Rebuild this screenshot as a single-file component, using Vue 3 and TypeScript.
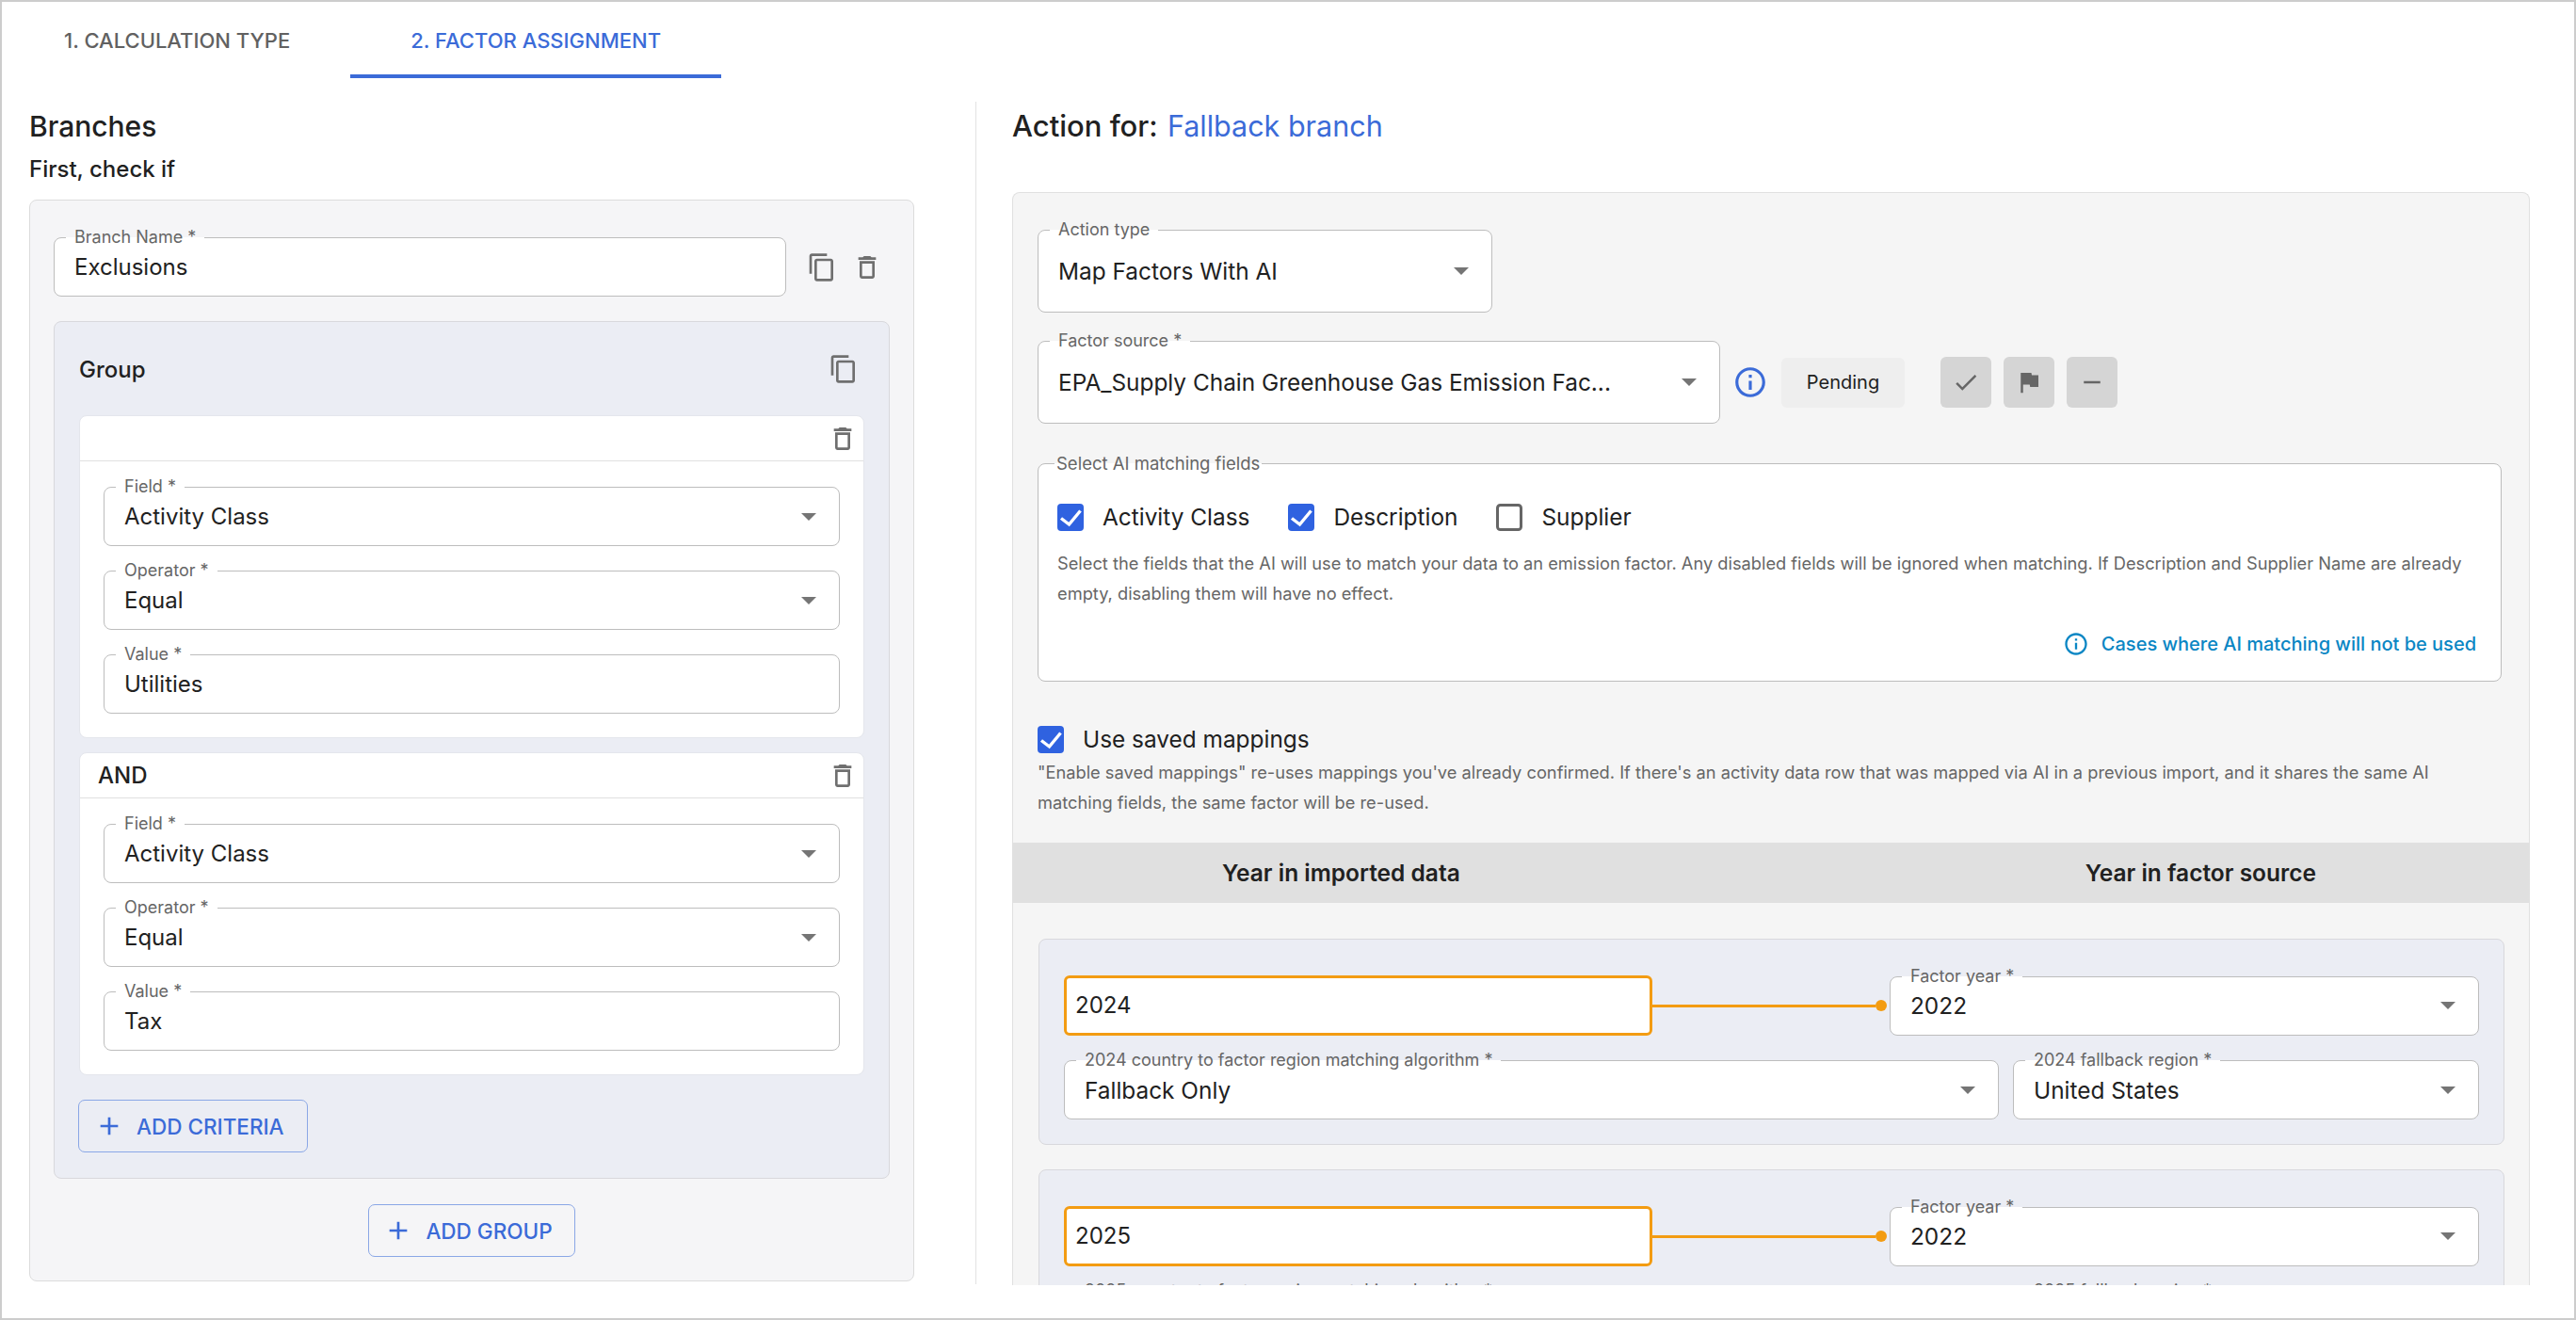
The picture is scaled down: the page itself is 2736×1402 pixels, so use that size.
<script setup lang="ts">
const copyPath = 'M16 1H4c-1.1 0-2 .9-2 2v14h2V3h12V1zm3 4H8c-1.1 0-2 .9-2 2v14c0 1.1.9 2 2 2h11c1.1 0 2-.9 2-2V7c0-1.1-.9-2-2-2zm0 16H8V7h11v14z'
const trashPath = 'M6 19c0 1.1.9 2 2 2h8c1.1 0 2-.9 2-2V7H6v12zM8 9h8v10H8V9zm7.5-5l-1-1h-5l-1 1H5v2h14V4h-3.5z'
const plusPath = 'M19 13h-6v6h-2v-6H5v-2h6V5h2v6h6v2z'
const infoPath = 'M11 7h2v2h-2zm0 4h2v6h-2zm1-9C6.48 2 2 6.48 2 12s4.48 10 10 10 10-4.48 10-10S17.52 2 12 2zm0 18c-4.41 0-8-3.59-8-8s3.59-8 8-8 8 3.59 8 8-3.59 8-8 8z'

const criteria = [
  { join: '', value: 'Utilities' },
  { join: 'AND', value: 'Tax' }
]

const matchFields = [
  { name: 'Activity Class', checked: true },
  { name: 'Description', checked: true },
  { name: 'Supplier', checked: false }
]

const statusIcons = [
  'M9 16.17 4.83 12l-1.42 1.41L9 19 21 7l-1.41-1.41z',
  'M14.4 6 14 4H5v17h2v-7h5.6l.4 2h7V6z',
  'M19 13H5v-2h14v2z'
]

const years = ['2024', '2025']
</script>

<template>
  <div class="page">
    <nav class="tabs">
      <div class="tab">1. CALCULATION TYPE</div>
      <div class="tab active">2. FACTOR ASSIGNMENT</div>
    </nav>

    <main class="columns">
      <section class="left">
        <h2 class="title">Branches</h2>
        <h3 class="subtitle">First, check if</h3>

        <div class="branch">
          <div class="branch-row">
            <div class="field branch-name">
              <span class="legend">Branch Name *</span>
              <span class="text">Exclusions</span>
            </div>
            <svg class="icon" viewBox="0 0 24 24"><path :d="copyPath" /></svg>
            <svg class="icon" viewBox="0 0 24 24"><path :d="trashPath" /></svg>
          </div>

          <div class="group">
            <div class="group-head">
              <span class="group-title">Group</span>
              <svg class="icon" viewBox="0 0 24 24"><path :d="copyPath" /></svg>
            </div>

            <div v-for="c in criteria" :key="c.value" class="criterion">
              <div class="criterion-head">
                <span>{{ c.join }}</span>
                <svg class="icon" viewBox="0 0 24 24"><path :d="trashPath" /></svg>
              </div>
              <div class="criterion-body">
                <div class="field">
                  <span class="legend">Field *</span>
                  <span class="text">Activity Class</span>
                  <i class="arrow"></i>
                </div>
                <div class="field">
                  <span class="legend">Operator *</span>
                  <span class="text">Equal</span>
                  <i class="arrow"></i>
                </div>
                <div class="field">
                  <span class="legend">Value *</span>
                  <span class="text">{{ c.value }}</span>
                </div>
              </div>
            </div>

            <button class="add-btn criteria-btn">
              <svg viewBox="0 0 24 24"><path :d="plusPath" /></svg>
              ADD CRITERIA
            </button>
          </div>

          <button class="add-btn group-btn">
            <svg viewBox="0 0 24 24"><path :d="plusPath" /></svg>
            ADD GROUP
          </button>
        </div>
      </section>

      <section class="right">
        <h2 class="title action-title">Action for: <span class="blue">Fallback branch</span></h2>

        <div class="panel">
          <div class="panel-top">
            <div class="field action-type">
              <span class="legend">Action type</span>
              <span class="text">Map Factors With AI</span>
              <i class="arrow"></i>
            </div>

            <div class="source-row">
              <div class="field factor-source">
                <span class="legend">Factor source *</span>
                <span class="text">EPA_Supply Chain Greenhouse Gas Emission Fac...</span>
                <i class="arrow"></i>
              </div>
              <svg class="info" viewBox="0 0 24 24"><path :d="infoPath" /></svg>
              <div class="pending">Pending</div>
              <div class="status-btns">
                <div v-for="d in statusIcons" :key="d" class="status-btn">
                  <svg viewBox="0 0 24 24"><path :d="d" /></svg>
                </div>
              </div>
            </div>

            <div class="matching">
              <span class="legend matching-legend">Select AI matching fields</span>
              <div class="checks">
                <label v-for="f in matchFields" :key="f.name" class="check">
                  <svg class="box" viewBox="0 0 28 29">
                    <template v-if="f.checked">
                      <rect width="28" height="29" rx="4" fill="#2f62e0" />
                      <path d="M4 15.5l8.5 6.5L24.5 7.5" fill="none" stroke="#fff" stroke-width="3.4" />
                    </template>
                    <rect v-else x="1.5" y="1.5" width="25" height="26" rx="3" fill="#fff" stroke="#666" stroke-width="3" />
                  </svg>
                  {{ f.name }}
                </label>
              </div>
              <p class="help">Select the fields that the AI will use to match your data to an emission factor. Any disabled fields will be ignored when matching. If Description and Supplier Name are already empty, disabling them will have no effect.</p>
              <div class="cases">
                <svg viewBox="0 0 24 24"><path :d="infoPath" /></svg>
                Cases where AI matching will not be used
              </div>
            </div>

            <label class="check saved">
              <svg class="box" viewBox="0 0 28 29">
                <rect width="28" height="29" rx="4" fill="#2f62e0" />
                <path d="M4 15.5l8.5 6.5L24.5 7.5" fill="none" stroke="#fff" stroke-width="3.4" />
              </svg>
              Use saved mappings
            </label>
            <p class="help saved-help">"Enable saved mappings" re-uses mappings you've already confirmed. If there's an activity data row that was mapped via AI in a previous import, and it shares the same AI matching fields, the same factor will be re-used.</p>
          </div>

          <div class="year-head">
            <span>Year in imported data</span>
            <span>Year in factor source</span>
          </div>

          <div class="year-list">
            <div v-for="y in years" :key="y" class="year-card">
              <div class="year-row">
                <div class="year-input">{{ y }}</div>
                <div class="connector"><i class="line"></i><i class="dot"></i></div>
                <div class="field factor-year">
                  <span class="legend">Factor year *</span>
                  <span class="text">2022</span>
                  <i class="arrow"></i>
                </div>
              </div>
              <div class="year-row region-row">
                <div class="field algorithm">
                  <span class="legend">{{ y }} country to factor region matching algorithm *</span>
                  <span class="text">Fallback Only</span>
                  <i class="arrow"></i>
                </div>
                <div class="field region">
                  <span class="legend">{{ y }} fallback region *</span>
                  <span class="text">United States</span>
                  <i class="arrow"></i>
                </div>
              </div>
            </div>
          </div>
        </div>
      </section>
    </main>
  </div>
</template>

<style>
html,
body {
  margin: 0;
  background: #fff;
}
</style>

<style scoped>
.page {
  width: 2736px;
  height: 1402px;
  box-sizing: border-box;
  border: 2px solid #ccc;
  overflow: hidden;
  background: #fff;
  color: #212121;
  font-family: Inter, "Liberation Sans", sans-serif;
}

.tabs {
  display: flex;
  height: 81px;
  padding-left: 2px;
}

.tab {
  padding: 0 64px;
  line-height: 83px;
  font-size: 22px;
  font-weight: 500;
  color: #616161;
}

.tab.active {
  color: #3b6bd8;
  box-shadow: inset 0 -4px 0 #3b6bd8;
}

.columns {
  display: flex;
  align-items: flex-start;
}

.left {
  width: 1034px;
  box-sizing: border-box;
  padding: 31px 0 0 29px;
  flex: none;
}

.title {
  margin: 0;
  font-size: 30px;
  line-height: 40px;
  font-weight: 500;
}

.subtitle {
  margin: 10px 0 16px;
  font-size: 24px;
  line-height: 32px;
  font-weight: 500;
}

.branch {
  width: 940px;
  box-sizing: border-box;
  padding: 39px 25px 25px;
  background: #f5f5f7;
  border: 1px solid #dcdcdc;
  border-radius: 8px;
  --outer: #f5f5f7;
}

.branch-row {
  display: flex;
  align-items: center;
  gap: 16px;
}

.branch-name {
  flex: none;
  width: 778px;
  height: 62px;
  margin-right: 6px;
}

.icon {
  flex: none;
  width: 32px;
  height: 32px;
  fill: #6f6f6f;
}

.field {
  position: relative;
  display: flex;
  align-items: center;
  box-sizing: border-box;
  height: 63px;
  padding: 0 50px 0 21px;
  background: #fff;
  border: 1px solid #bdbdbd;
  border-radius: 8px;
  font-size: 24px;
}

.legend {
  position: absolute;
  top: -12px;
  left: 12px;
  padding: 0 9px;
  font-size: 18px;
  line-height: 22px;
  color: #666;
  white-space: nowrap;
  background: linear-gradient(var(--outer) 50%, #fff 50%);
}

.text {
  white-space: nowrap;
}

.arrow {
  position: absolute;
  top: 50%;
  right: 24px;
  margin-top: -4px;
  border-left: 8px solid transparent;
  border-right: 8px solid transparent;
  border-top: 8px solid #757575;
}

.group {
  margin-top: 26px;
  padding: 34px 26px 27px;
  background: #ebedf4;
  border: 1px solid #d8d8dc;
  border-radius: 8px;
}

.group-head {
  display: flex;
  align-items: center;
  justify-content: space-between;
  padding-right: 6px;
  margin-bottom: 33px;
  font-size: 24px;
  font-weight: 500;
}

.criterion {
  margin-bottom: 15px;
  background: #fff;
  border: 1px solid #e4e6ec;
  border-radius: 8px;
  --outer: #fff;
}

.criterion-head {
  display: flex;
  align-items: center;
  justify-content: space-between;
  height: 47px;
  padding: 0 6px 0 19px;
  border-bottom: 1px solid #e0e0e0;
  font-size: 24px;
  font-weight: 500;
}

.criterion-body {
  display: flex;
  flex-direction: column;
  gap: 26px;
  padding: 27px 25px 25px;
}

.add-btn {
  display: inline-flex;
  align-items: center;
  gap: 13px;
  height: 56px;
  padding: 0 24px 0 16px;
  background: transparent;
  border: 1.5px solid #8aa7e6;
  border-radius: 7px;
  color: #3b6bd8;
  font-family: inherit;
  font-size: 22.5px;
  font-weight: 500;
}

.add-btn svg {
  width: 32px;
  height: 32px;
  fill: #3b6bd8;
}

.criteria-btn {
  margin: 11px 0 0 -1px;
}

.group-btn {
  display: flex;
  margin: 27px auto 0;
  padding: 0 23px 0 15px;
}

.right {
  flex: 1;
  height: 1256px;
  box-sizing: border-box;
  margin-top: 25px;
  padding: 6px 47px 0 38px;
  border-left: 1px solid #e2e2e2;
}

.action-title {
  margin-bottom: 50px;
  font-size: 31px;
}

.blue {
  margin-left: 2px;
  color: #3b6bd8;
  font-size: 30.5px;
  font-weight: 400;
}

.panel {
  height: 1160px;
  overflow: hidden;
  background: #f5f5f5;
  border: 1px solid #e0e0e0;
  border-bottom: none;
  border-radius: 8px 8px 0 0;
  --outer: #f5f5f5;
}

.panel-top {
  padding: 39px 29px 27px 26px;
}

.panel .text {
  font-size: 24.4px;
}

.action-type {
  width: 483px;
  height: 88px;
}

.source-row {
  display: flex;
  align-items: center;
  margin-top: 30px;
}

.factor-source {
  flex: none;
  width: 725px;
  height: 88px;
}

.info {
  flex: none;
  width: 38px;
  height: 38px;
  margin-left: 13px;
  fill: #3b6bd8;
}

.pending {
  width: 131px;
  height: 53px;
  margin-left: 14px;
  background: #eee;
  border-radius: 6px;
  font-size: 20px;
  line-height: 53px;
  text-align: center;
}

.status-btns {
  display: flex;
  gap: 13px;
  margin-left: 38px;
}

.status-btn {
  display: flex;
  align-items: center;
  justify-content: center;
  width: 54px;
  height: 54px;
  background: #d5d5d5;
  border-radius: 6px;
}

.status-btn svg {
  width: 30px;
  height: 30px;
  fill: #666;
}

.matching {
  position: relative;
  box-sizing: border-box;
  height: 232px;
  margin-top: 42px;
  padding: 41px 26px 0 20px;
  background: #fff;
  border: 1px solid #bdbdbd;
  border-radius: 8px;
}

.matching-legend {
  left: 17px;
  padding: 0 2px;
  font-size: 18.5px;
}

.checks {
  display: flex;
  gap: 41px;
}

.check {
  display: flex;
  align-items: center;
  gap: 20px;
  font-size: 24.4px;
}

.box {
  flex: none;
  width: 28px;
  height: 29px;
}

.help {
  margin: 18px 0 0;
  font-size: 18.25px;
  line-height: 32px;
  color: #666;
}

.cases {
  display: flex;
  align-items: center;
  justify-content: flex-end;
  gap: 13px;
  margin-top: 24px;
  font-size: 20px;
  font-weight: 500;
  color: #0a86c4;
}

.cases svg {
  width: 28px;
  height: 28px;
  fill: #0a86c4;
}

.saved {
  margin-top: 46px;
}

.saved-help {
  margin-top: 4px;
}

.year-head {
  display: flex;
  justify-content: space-between;
  height: 64px;
  padding: 0 226px 0 222px;
  background: #e0e0e0;
  font-size: 24.5px;
  font-weight: 600;
  line-height: 64px;
}

.year-list {
  padding: 38px 26px 0 27px;
  --outer: #ebedf4;
}

.year-card {
  box-sizing: border-box;
  height: 219px;
  margin-bottom: 26px;
  padding: 38px 26px 26px;
  background: #ebedf4;
  border: 1px solid #d8d8dc;
  border-radius: 8px;
}

.year-row {
  display: flex;
  align-items: center;
}

.year-input {
  flex: none;
  box-sizing: border-box;
  width: 625px;
  height: 64px;
  padding-left: 9px;
  background: #fff;
  border: 3px solid #f39c12;
  border-radius: 6px;
  font-size: 24px;
  line-height: 58px;
}

.connector {
  flex: 1;
  display: flex;
  align-items: center;
  padding-right: 3px;
}

.line {
  flex: 1;
  height: 3px;
  background: #f39c12;
}

.dot {
  width: 12px;
  height: 12px;
  border-radius: 50%;
  background: #f39c12;
}

.factor-year {
  flex: none;
  width: 626px;
}

.region-row {
  gap: 15px;
  margin-top: 26px;
}

.algorithm {
  flex: none;
  width: 993px;
}

.region {
  flex: 1;
}
</style>
